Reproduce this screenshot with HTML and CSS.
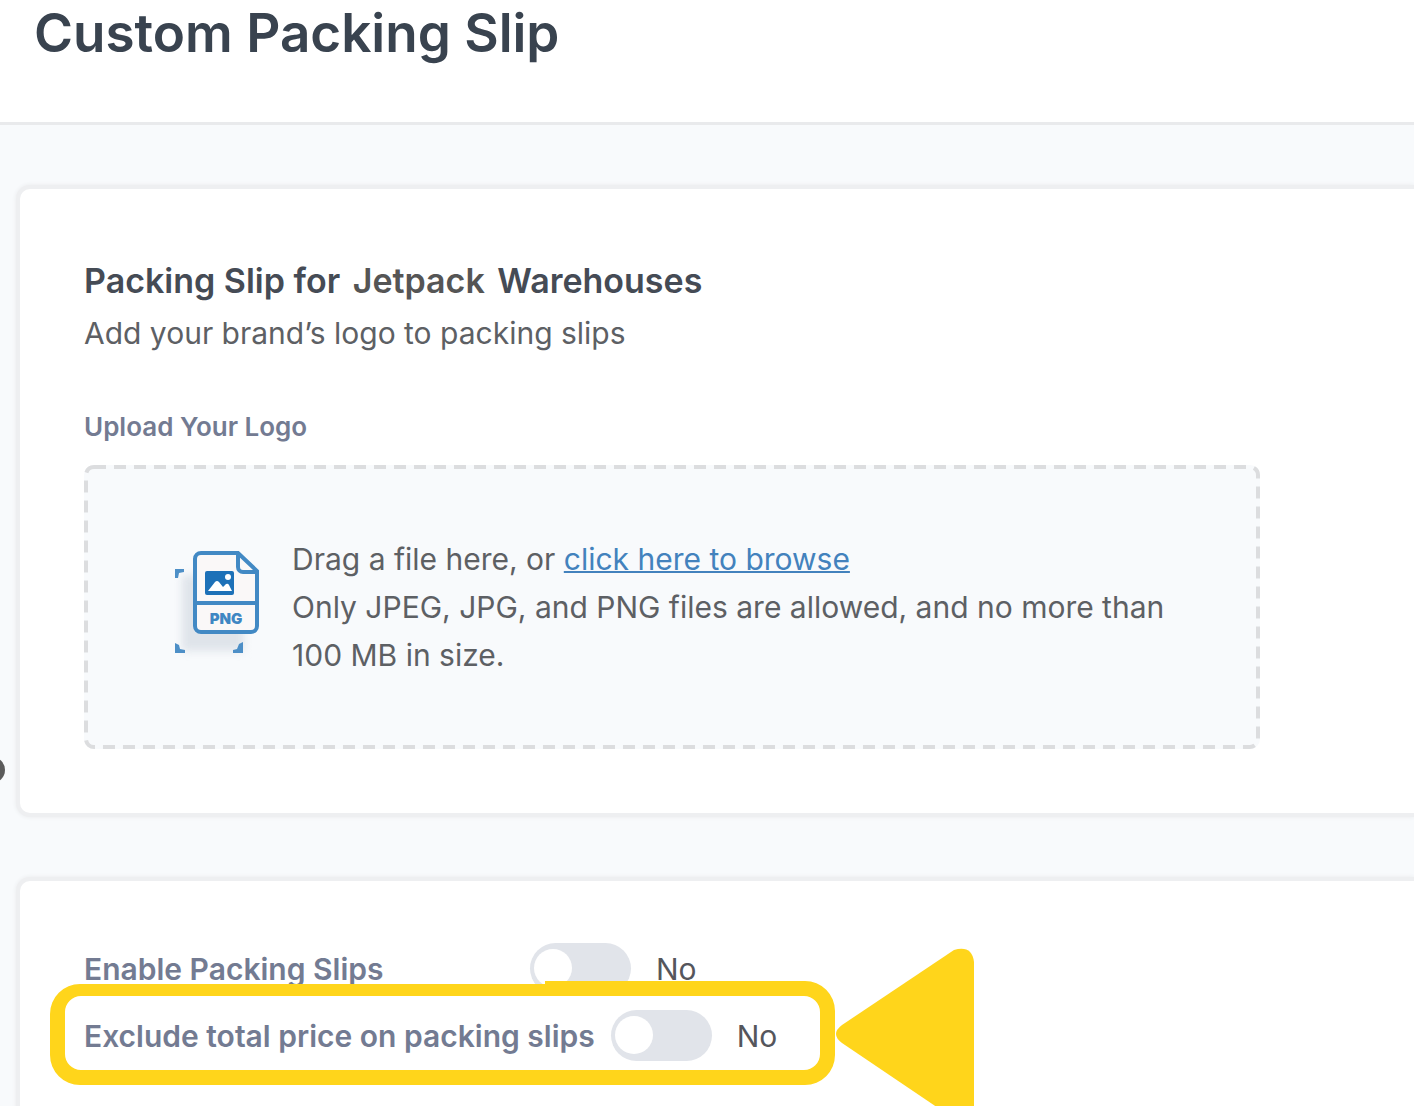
FILE: index.html
```html
<!DOCTYPE html>
<html lang="en">
<head>
    <meta charset="UTF-8">
    <meta name="viewport" content="width=device-width, initial-scale=1.0">
    <title>Custom Packing Slip</title>
    <link rel="stylesheet" href="styles.css">
</head>
<body>
    <header class="page-header">
        <h1>Custom Packing Slip</h1>
    </header>

    <main class="content">
        <span class="side-dot"></span>

        <section class="card">
            <h2>Packing Slip for <span class="brand">Jetpack</span> Warehouses</h2>
            <p class="subtitle">Add your brand’s logo to packing slips</p>

            <h3>Upload Your Logo</h3>
            <div class="dropzone">
                <svg class="dashes" xmlns="http://www.w3.org/2000/svg">
                    <rect width="100%" height="100%" rx="8"/>
                </svg>
                <svg class="file-icon" viewBox="0 0 92 112" xmlns="http://www.w3.org/2000/svg">
                    <path class="icon-shadow" d="M10 24h62v76H10z"/>
                    <path d="M3 18h9v3l-5 1-1 5H3zM3 92l4 2 1 4 5 1v3H3zM71 91v11H61v-3l4-1 2-5z" fill="#4d8fc7"/>
                    <path d="M29 2h37l19 18v55a6 6 0 0 1-6 6H29a6 6 0 0 1-6-6V8a6 6 0 0 1 6-6z" fill="#faf8f8" stroke="#4289c4" stroke-width="4"/>
                    <path d="M66 3v13a5 5 0 0 0 5 5h14M24 52h61" fill="none" stroke="#4289c4" stroke-width="4"/>
                    <rect x="33" y="20" width="29" height="24" rx="2" fill="#1d71b8"/>
                    <path d="M36 40l7-9q2-2 4 0l4 5 3-3q2-1 3 1l3 6z" fill="#fff"/>
                    <circle cx="56" cy="26" r="3" fill="#fff"/>
                    <text x="54" y="73" text-anchor="middle">PNG</text>
                </svg>
                <div class="dropzone-text">
                    <p>Drag a file here, or <a href="#">click here to browse</a></p>
                    <p>Only JPEG, JPG, and PNG files are allowed, and no more than 100 MB in size.</p>
                </div>
            </div>
        </section>

        <section class="card settings">
            <div class="setting">
                <label for="enable-slips">Enable Packing Slips</label>
                <input type="checkbox" class="toggle" id="enable-slips">
                <span class="state">No</span>
            </div>
            <div class="setting">
                <label for="exclude-price">Exclude total price on packing slips</label>
                <input type="checkbox" class="toggle" id="exclude-price">
                <span class="state">No</span>
                <!-- Highlight ring and arrow -->
                <svg class="callout" viewBox="0 0 924 180" xmlns="http://www.w3.org/2000/svg">
                    <path fill-rule="evenodd" d="M30 36H495V33H755a30 30 0 0 1 30 30V107a30 30 0 0 1-30 30H30a30 30 0 0 1-30-30V66a30 30 0 0 1 30-30zM31 48a16 16 0 0 0-16 16V106a16 16 0 0 0 16 16H754a16 16 0 0 0 16-16V64a16 16 0 0 0-16-16z"/>
                    <path d="M792 77Q780 86 792 95L900 168Q924 180 924 160V14Q922-3 904 2z"/>
                </svg>
            </div>
        </section>
    </main>
</body>
</html>
```
FILE: styles.css
```css
:root {
    --text-dark: #39434f;
    --text-body: #5d6064;
    --text-label: #737b92;
    --link: #4382bd;
    --page-bg: #f8fafc;
    --line: #e9eaec;
    --toggle: #e1e4ea;
    --highlight: #ffd51b;
}

* {
    margin: 0;
    padding: 0;
    box-sizing: border-box;
}

body {
    background-color: var(--page-bg);
    color: var(--text-body);
    font-family: Inter, "Open Sans", sans-serif;
    font-size: 30px;
    line-height: 48px;
    height: 100vh;
    overflow: hidden;
    display: flex;
    flex-direction: column;
}

.page-header {
    background-color: #fff;
    border-bottom: 3px solid var(--line);
    padding: 4px 34px 60px;
}

.page-header h1 {
    color: var(--text-dark);
    font-size: 53px;
    font-weight: 600;
    line-height: 58px;
}

.content {
    flex: 1;
    position: relative;
    display: flex;
    flex-direction: column;
    gap: 60px;
    padding: 60px 0 0 16px;
}

.side-dot {
    position: absolute;
    left: -21px;
    top: 632px;
    width: 26px;
    height: 26px;
    border-radius: 50%;
    background-color: #5b5b5b;
}

.card {
    background-color: #fff;
    border: 4px solid #eeeff1;
    border-right: none;
    border-radius: 14px 0 0 14px;
    box-shadow: 0 0 4px #e9eaec;
    padding: 64px;
}

.card h2 {
    color: #454b55;
    font-size: 34px;
    font-weight: 600;
    line-height: 56px;
}

.brand {
    color: #555;
    margin: 0 4px;
}

.subtitle {
    margin-bottom: 48px;
}

.card h3 {
    color: var(--text-label);
    font-size: 26px;
    font-weight: 600;
    line-height: 44px;
    margin-bottom: 16px;
}

.dropzone {
    position: relative;
    display: flex;
    align-items: center;
    gap: 28px;
    max-width: 1176px;
    padding: 70px 84px 70px 88px;
    background-color: var(--page-bg);
    border-radius: 10px;
}

.dashes {
    position: absolute;
    left: 2px;
    top: 2px;
    width: calc(100% - 4px);
    height: calc(100% - 4px);
    overflow: visible;
    pointer-events: none;
}

.dashes rect {
    fill: none;
    stroke: #dcdddf;
    stroke-width: 4;
    stroke-dasharray: 12 8;
}

.dropzone a {
    color: var(--link);
    text-decoration-thickness: 2px;
}

.file-icon {
    flex: none;
    width: 92px;
    height: 112px;
}

.file-icon text {
    fill: #3f87c3;
    font-size: 15px;
    font-weight: 900;
}

.icon-shadow {
    fill: #dfe4ea;
    filter: blur(4px);
}

.settings {
    flex: 1;
    display: flex;
    flex-direction: column;
    gap: 16px;
    padding-top: 62px;
}

.setting {
    position: relative;
    display: flex;
    align-items: center;
}

.setting label {
    min-width: 430px;
    margin-right: 16px;
    color: var(--text-label);
    font-weight: 600;
}

.toggle {
    appearance: none;
    width: 101px;
    height: 51px;
    padding: 6px 4px;
    border-radius: 26px;
    background-color: var(--toggle);
    cursor: pointer;
}

.toggle::before {
    content: "";
    display: block;
    width: 38px;
    height: 38px;
    border-radius: 50%;
    background-color: #fff;
}

.toggle:checked::before {
    margin-left: auto;
}

.state {
    margin-left: 25px;
    color: #55565c;
}

.callout {
    position: absolute;
    left: -34px;
    top: -62px;
    width: 924px;
    height: 180px;
    fill: var(--highlight);
    pointer-events: none;
}
```
